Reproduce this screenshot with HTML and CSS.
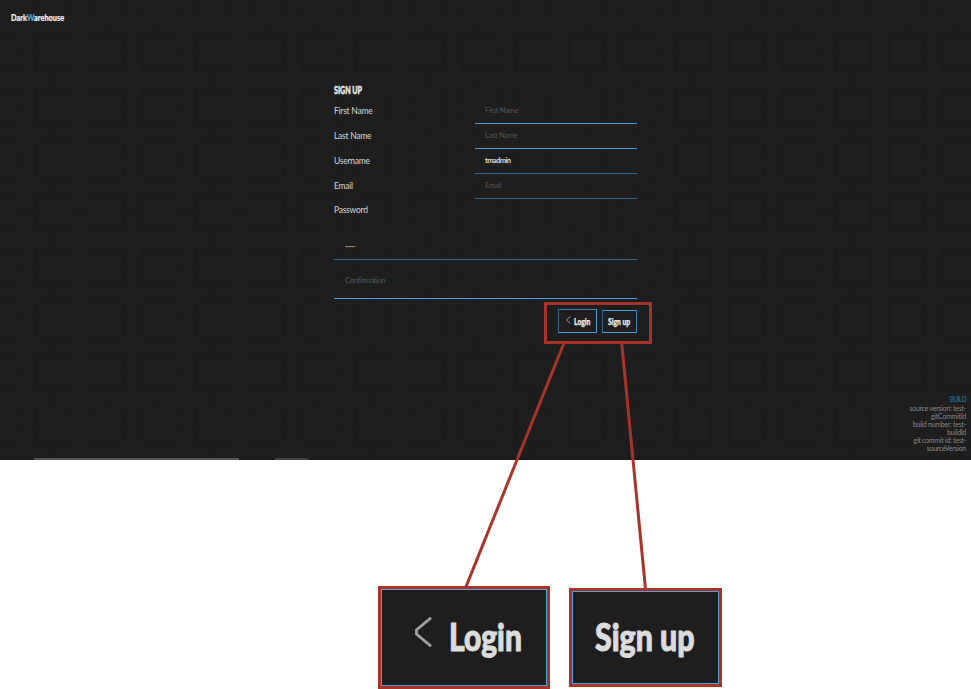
FILE: index.html
```html
<!DOCTYPE html>
<html lang="en">
<head>
<meta charset="utf-8">
<title>DarkWarehouse – Sign up</title>
<link rel="stylesheet" href="styles.css">
</head>
<body>
<div class="app">
  <svg class="tiles" width="971" height="460" aria-hidden="true">
    <defs>
      <pattern id="tile" x="35" y="35.2" width="53.33" height="53.2" patternUnits="userSpaceOnUse">
        <path d="M.5 .5H36V36H.5ZM36 18H53.33M18 36V53.2" fill="none" stroke="#191919" stroke-width="1.1"/>
      </pattern>
    </defs>
    <rect width="971" height="460" fill="url(#tile)"/>
  </svg>
  <header class="topbar"><div class="brand"><span class="fit">Dark<b>W</b>arehouse</span></div></header>
  <main class="panel">
    <h1><span class="fit">SIGN UP</span></h1>
    <div class="row"><label>First Name</label><div class="field bright">First Name</div></div>
    <div class="row"><label>Last Name</label><div class="field bright">Last Name</div></div>
    <div class="row"><label>Username</label><div class="field filled">tmadmin</div></div>
    <div class="row"><label>Email</label><div class="field">Email</div></div>
    <label class="pass">Password</label>
    <div class="wide first"><span class="dots">•••••</span></div>
    <div class="wide second bright">Confirmation</div>
    <div class="actions">
      <button class="btn login"><svg class="chev" width="5" height="8" viewBox="0 0 5 8"><path d="M4.5 .3L.6 4L4.5 7.7" fill="none" stroke="#bbb" stroke-width=".8"/></svg><span class="fit">Login</span></button>
      <button class="btn sign"><span class="fit">Sign up</span></button>
    </div>
  </main>
  <aside class="build"><strong>BUILD</strong><br>source version: test-<br>gitCommitId<br>build number: test-<br>buildId<br>git commit id: test-<br>sourceVersion</aside>
  <div class="edge"><i class="e1"></i><i class="e2"></i><i class="e3"></i></div>
</div>
<svg class="callout" width="971" height="689" aria-hidden="true">
  <g fill="none" stroke="#a93329" stroke-width="3">
    <rect x="545.5" y="303.5" width="105" height="39"/>
    <path d="M564 343L465.500 588M621.700 343L645.500 589"/>
  </g>
</svg>
<section class="details">
  <div class="big big-login"><svg width="18" height="30" viewBox="0 0 18 30"><path d="M17 .8L2.500 13V17L17 29.200" fill="none" stroke="#a0a0a0" stroke-width="2.800"/></svg><span class="fit">Login</span></div>
  <div class="big big-sign"><span class="fit">Sign up</span></div>
</section>
</body>
</html>
```
FILE: styles.css
```css
* { box-sizing: border-box; }
body { margin: 0; width: 971px; height: 689px; overflow: hidden; background: #fff; font-family: Lato, sans-serif; position: relative; }
.app { position: relative; height: 460px; background: #1e1e1e; color: #dedede; overflow: hidden; }
.tiles { position: absolute; left: 0; top: 0; }
.topbar { position: relative; height: 35px; padding: 12px 0 0 11px; background: rgba(30,30,30,.7); }
.fit { display: inline-block; transform-origin: 0 50%; white-space: nowrap; }
.brand { font-size: 9.5px; line-height: 12px; font-weight: 900; color: #eee; -webkit-text-stroke: .2px; }
.brand .fit { transform: scaleX(.77); }
.brand b { color: #4aa3df; }
.panel { position: relative; width: 324px; height: 276px; margin: 40px 0 0 323px; padding: 7px 10px 0 11px; background: rgba(30,30,30,.7); }
h1 { margin: 0; height: 16px; font-size: 12px; line-height: 16px; font-weight: 900; color: #e8e8e8; -webkit-text-stroke: .5px; }
h1 .fit { transform: scaleX(.59); }
.row { display: grid; grid-template-columns: 140.5px 162px; height: 25px; }
label { display: block; font-size: 8.5px; line-height: 27px; letter-spacing: -.25px; color: #d8d8d8; }
.field, .wide { border-bottom: 1px solid #33668a; color: #555; font-size: 7.5px; letter-spacing: -.3px; padding-left: 10.5px; }
.field { line-height: 26px; height: 26px; margin-bottom: -1px; }
.filled { color: #ddd; font-weight: 700; letter-spacing: -.6px; }
.bright { border-color: #4aa3e0; }
.pass { height: 20px; line-height: 24px; }
.wide { width: 302.5px; padding-left: 11px; }
.first { height: 42px; line-height: 58px; }
.dots { display: block; font-size: 4px; color: #aaa; letter-spacing: -.35px; }
.second { height: 39px; font-size: 8px; line-height: 41px; letter-spacing: -.7px; letter-spacing: -.5px; }
.actions { display: flex; justify-content: flex-end; align-items: flex-end; gap: 5px; height: 34px; }
.btn { border: 1px solid #4aa3df; background: #1e1e1e; color: #eee; font: 900 9.5px/23px Lato, sans-serif; padding: 0; display: flex; text-align: left; -webkit-text-stroke: .25px; }
.login { width: 39px; height: 24px; border-left-color: #33668a; border-top-color: #3d81ae; padding-left: 7px; }
.sign { width: 35px; height: 23px; border-left-color: #33668a; border-right-color: #3d81ae; padding-left: 5px; line-height: 22px; }
.btn .fit { transform: scaleX(.71); }
.chev { margin: 6px 3px 0 0; flex: none; }
.build { position: absolute; right: 5px; top: 395px; text-align: right; font-size: 7px; line-height: 8.05px; color: #888; letter-spacing: -.27px; }
.build strong { color: #2d648b; font-size: 6.5px; letter-spacing: -.6px; }
.edge { position: absolute; left: 0; top: 458px; width: 971px; height: 2px; display: flex; background: #1a1a1a; }
.e1 { margin-left: 34px; width: 205px; background: #555; }
.e2 { margin-left: 36px; width: 31px; background: #444; }
.e3 { width: 3px; background: #333; }
.callout { position: absolute; left: 0; top: 0; z-index: 2; }
.details { display: flex; gap: 19px; padding: 126px 0 0 378px; }
.big { background: #1e1e1e; border: 3px solid #a93329; box-shadow: inset 0 0 0 1px #4aa3df; color: #dcdcdc; font-size: 37px; line-height: 92px; font-weight: 900; display: flex; -webkit-text-stroke: 1px; }
.big-login { width: 172px; height: 103px; padding: 2px 0 0 33px; }
.big-login svg { margin: 26px 17px 0 0; flex: none; }
.big-login .fit { transform: scaleX(.81); }
.big-sign { width: 153px; height: 99px; margin-top: 2px; padding-left: 23px; }
.big-sign .fit { transform: scaleX(.82); }
```
